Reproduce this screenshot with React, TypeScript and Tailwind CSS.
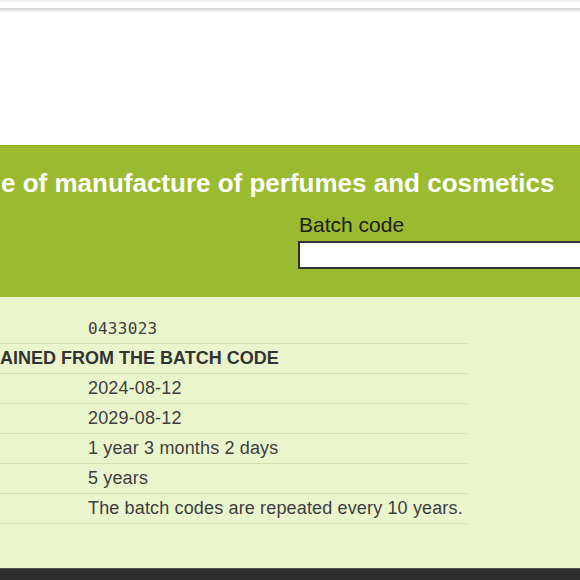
export default function App() {
  const rows: { v: string; mono?: boolean; head?: boolean }[] = [
    { v: "0433023", mono: true },
    { v: "AINED FROM THE BATCH CODE", head: true },
    { v: "2024-08-12" },
    { v: "2029-08-12" },
    { v: "1 year 3 months 2 days" },
    { v: "5 years" },
    { v: "The batch codes are repeated every 10 years." },
  ];
  return (
    <div className="w-[580px] h-[580px] overflow-hidden bg-white flex flex-col font-['Liberation_Sans',Arial,sans-serif]">
      <div className="h-[2px] bg-[#eef2f2]" />
      <div className="h-[6px] bg-white" />
      <div className="h-[2px] bg-[#d7d7d7]" />
      <div className="h-[2px] bg-[#efefef]" />
      <div className="h-[133px] bg-white" />
      <div className="h-[152px] bg-[#9bba2f] border-t border-[#8eab2a] flex flex-col">
        <h1 className="mt-[22px] text-[26px] leading-[30px] font-bold text-white whitespace-nowrap pl-[1px]">
          e of manufacture of perfumes and cosmetics
        </h1>
        <div className="ml-[298px] mt-[15px] flex flex-col">
          <label className="text-[21px] leading-[24px] text-[#1c1c1c] pl-[1px]">Batch code</label>
          <div className="mt-[4px] h-[28px] w-[300px] bg-white border-2 border-[#333] border-r-0" />
        </div>
      </div>
      <div className="flex-1 bg-[#ebf5cd] pt-[17px]">
        <div className="w-[467px] flex flex-col">
          {rows.map((r, i) => (
            <div key={i} className="h-[30px] border-b border-[#d6e2b0] flex items-center">
              {r.head ? (
                <span className="text-[18px] font-bold text-[#333]">{r.v}</span>
              ) : (
                <span
                  className={
                    "ml-[88px] text-[#3e3e3e] " +
                    (r.mono
                      ? "font-['DejaVu_Sans_Mono',monospace] text-[16px] tracking-[0.3px]"
                      : "text-[18px] tracking-[0.15px]")
                  }
                >
                  {r.v}
                </span>
              )}
            </div>
          ))}
        </div>
      </div>
      <div className="h-[12px] bg-[#2d2d2d] border-t border-[#555]" />
    </div>
  );
}
